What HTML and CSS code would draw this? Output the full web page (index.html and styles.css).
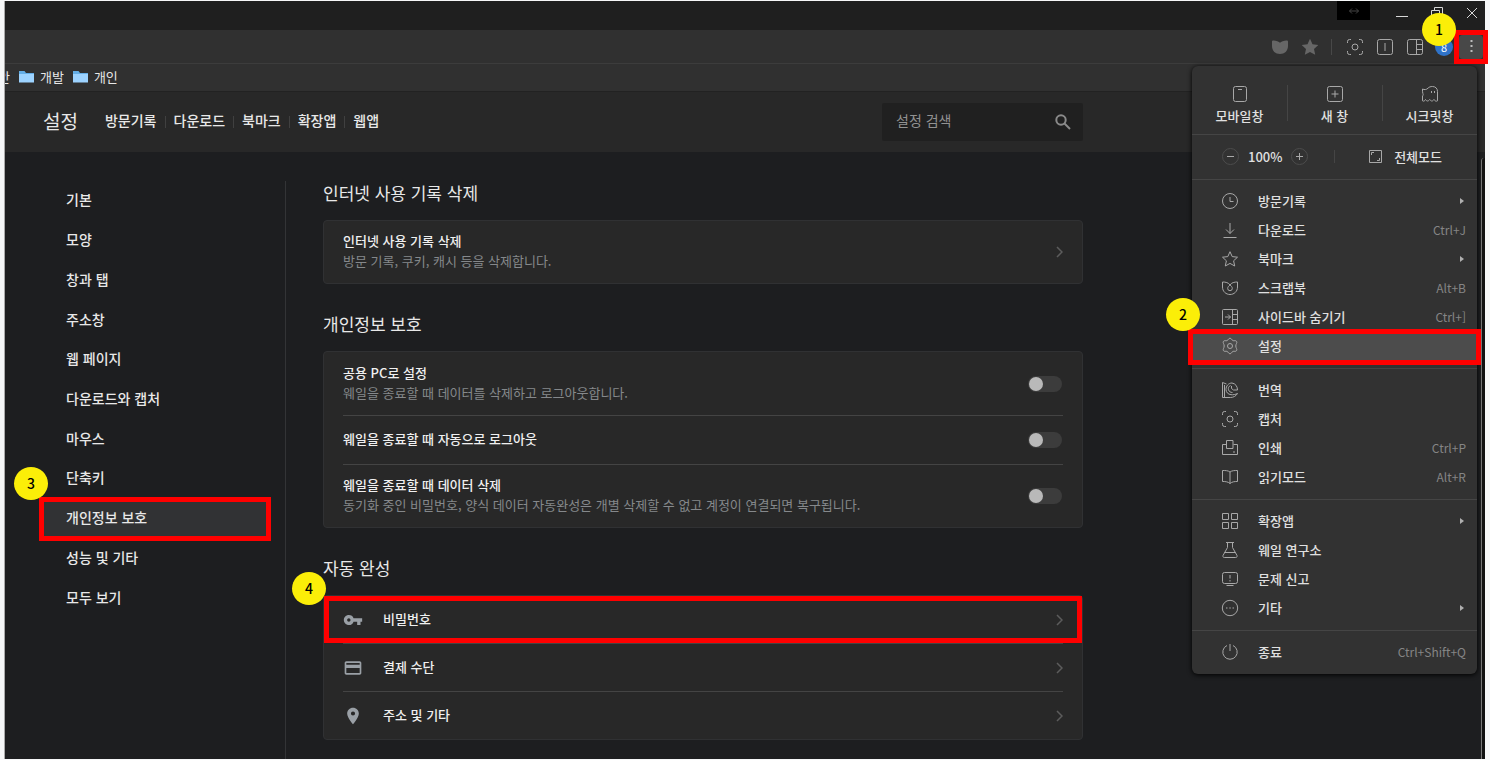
FILE: index.html
```html
<!DOCTYPE html>
<html lang="ko">
<head>
  <meta charset="UTF-8">
  <meta name="viewport" content="width=device-width, initial-scale=1.0">
  <title>설정 - 개인정보 보호</title>
  <link rel="stylesheet" href="styles.css">
</head>
<body>
  <div class="window">
    <div class="titlebar">
      <span class="resize-tab"><svg width="12" height="8" viewBox="0 0 12 8"><path d="M1.500 4h9M4 1.500L1.500 4 4 6.500M8 1.500L10.500 4 8 6.500"/></svg></span>
      <button class="win-btn" aria-label="최소화"><svg width="12" height="12" viewBox="0 0 12 12"><path d="M0 9.500h12"/></svg></button>
      <button class="win-btn" aria-label="이전 크기로"><svg width="12" height="12" viewBox="0 0 12 12"><path d="M.5 3.500h8v8h-8zM3.500 3.500v-3h8v8h-3"/></svg></button>
      <button class="win-btn" aria-label="닫기"><svg width="12" height="12" viewBox="0 0 12 12"><path d="M1 1l10 10M11 1L1 11"/></svg></button>
    </div>

    <div class="toolbar">
      <button class="tool dim" aria-label="스크랩북"><svg width="18" height="18" viewBox="0 0 18 18"><path d="M1 3.500c0-1 .8-1.200 1.700-1.100C5 2.600 8 3.200 9 4.800c1-1.600 4-2.200 6.300-2.400.9-.1 1.700.1 1.700 1.100V8c0 5-3.500 8-8 8s-8-3-8-8z"/></svg></button>
      <button class="tool dim" aria-label="북마크 추가"><svg width="18" height="18" viewBox="0 0 18 18"><path d="M9 .8l2.500 5.400 5.800.7-4.300 4 1.200 5.900L9 13.900l-5.200 2.900L5 10.900.7 6.900l5.800-.7z"/></svg></button>
      <span class="tool-sep"></span>
      <button class="tool" aria-label="캡처"><svg width="16" height="16" viewBox="0 0 16 16"><path d="M.5 4V2.500a2 2 0 0 1 2-2H4M12 .5h1.500a2 2 0 0 1 2 2V4M15.500 12v1.500a2 2 0 0 1-2 2H12M4 15.500H2.500a2 2 0 0 1-2-2V12"/><circle cx="8" cy="8" r="3"/></svg></button>
      <button class="tool" aria-label="듀얼 탭"><svg width="16" height="16" viewBox="0 0 16 16"><rect x=".5" y=".5" width="15" height="15" rx="2"/><path d="M8 4v8"/></svg></button>
      <button class="tool" aria-label="사이드바"><svg width="16" height="16" viewBox="0 0 16 16"><rect x=".5" y=".5" width="15" height="15" rx="2"/><path d="M9.500 .5v15M9.500 5.500h6M9.500 10.500h6"/></svg></button>
      <button class="avatar">8</button>
      <div class="more-wrap mark">
        <button class="more" aria-label="메뉴"><svg width="3" height="13" viewBox="0 0 3 13"><path d="M.5 0h2v2h-2zM.5 5h2v2h-2zM.5 10h2v2h-2z"/></svg></button>
        <span class="badge">1</span>
      </div>
    </div>

    <div class="bookmarks">
      <a class="bookmark first" href="#">안</a>
      <a class="bookmark" href="#"><svg width="15" height="13" viewBox="0 0 15 13"><path fill="#64aee6" d="M0 1h5.500l1.500 2h8v9H0z"/><path fill="#9dd3ff" d="M0 4h15v8.500H0z"/></svg>개발</a>
      <a class="bookmark" href="#"><svg width="15" height="13" viewBox="0 0 15 13"><path fill="#64aee6" d="M0 1h5.500l1.500 2h8v9H0z"/><path fill="#9dd3ff" d="M0 4h15v8.500H0z"/></svg>개인</a>
    </div>

    <header class="header">
      <div class="header-inner">
        <h1>설정</h1>
        <nav class="tabs">
          <a href="#">방문기록</a>
          <a href="#">다운로드</a>
          <a href="#">북마크</a>
          <a href="#">확장앱</a>
          <a href="#">웹앱</a>
        </nav>
        <label class="search">
          <input type="text" placeholder="설정 검색" aria-label="설정 검색">
          <svg width="16" height="16" viewBox="0 0 16 16"><circle cx="6" cy="6" r="4.700"/><path d="M9.500 9.500l5.500 5.500"/></svg>
        </label>
      </div>
    </header>

    <div class="page">
      <div class="page-inner">
        <aside class="sidebar">
          <nav class="side-list">
            <a href="#">기본</a>
            <a href="#">모양</a>
            <a href="#">창과 탭</a>
            <a href="#">주소창</a>
            <a href="#">웹 페이지</a>
            <a href="#">다운로드와 캡처</a>
            <a href="#">마우스</a>
            <a href="#">단축키</a>
            <a href="#" class="active mark">개인정보 보호<span class="badge">3</span></a>
            <a href="#">성능 및 기타</a>
            <a href="#">모두 보기</a>
          </nav>
        </aside>

        <main class="content">
          <section>
            <h2>인터넷 사용 기록 삭제</h2>
            <div class="card">
              <a class="row tall" href="#">
                <span class="text"><strong>인터넷 사용 기록 삭제</strong><small>방문 기록, 쿠키, 캐시 등을 삭제합니다.</small></span>
                <svg class="chevron" width="7" height="12" viewBox="0 0 7 12"><path d="M1 1l5 5-5 5"/></svg>
              </a>
            </div>
          </section>

          <section>
            <h2>개인정보 보호</h2>
            <div class="card">
              <label class="row tall">
                <span class="text"><strong>공용 PC로 설정</strong><small>웨일을 종료할 때 데이터를 삭제하고 로그아웃합니다.</small></span>
                <input class="toggle" type="checkbox">
              </label>
              <label class="row">
                <span class="text"><strong>웨일을 종료할 때 자동으로 로그아웃</strong></span>
                <input class="toggle" type="checkbox">
              </label>
              <label class="row tall">
                <span class="text"><strong>웨일을 종료할 때 데이터 삭제</strong><small>동기화 중인 비밀번호, 양식 데이터 자동완성은 개별 삭제할 수 없고 계정이 연결되면 복구됩니다.</small></span>
                <input class="toggle" type="checkbox">
              </label>
            </div>
          </section>

          <section>
            <h2>자동 완성</h2>
            <div class="card autofill">
              <a class="row mark" href="#">
                <svg class="row-icon" width="20" height="20" viewBox="0 0 24 24"><path d="M12.650 10A5.990 5.990 0 0 0 7 6c-3.310 0-6 2.690-6 6s2.690 6 6 6a5.990 5.990 0 0 0 5.650-4H17v4h4v-4h2v-4H12.650zM7 14c-1.100 0-2-.9-2-2s.9-2 2-2 2 .9 2 2-.9 2-2 2z"/></svg>
                <span class="text"><strong>비밀번호</strong></span>
                <svg class="chevron" width="7" height="12" viewBox="0 0 7 12"><path d="M1 1l5 5-5 5"/></svg>
                <span class="badge">4</span>
              </a>
              <a class="row" href="#">
                <svg class="row-icon" width="20" height="20" viewBox="0 0 24 24"><path d="M20 4H4c-1.110 0-1.990.89-1.990 2L2 18c0 1.110.89 2 2 2h16c1.110 0 2-.89 2-2V6c0-1.110-.89-2-2-2zm0 14H4v-6h16v6zm0-10H4V6h16v2z"/></svg>
                <span class="text"><strong>결제 수단</strong></span>
                <svg class="chevron" width="7" height="12" viewBox="0 0 7 12"><path d="M1 1l5 5-5 5"/></svg>
              </a>
              <a class="row" href="#">
                <svg class="row-icon" width="20" height="20" viewBox="0 0 24 24"><path d="M12 2C8.130 2 5 5.130 5 9c0 5.250 7 13 7 13s7-7.750 7-13c0-3.870-3.130-7-7-7zm0 9.500a2.500 2.500 0 0 1 0-5 2.500 2.500 0 0 1 0 5z"/></svg>
                <span class="text"><strong>주소 및 기타</strong></span>
                <svg class="chevron" width="7" height="12" viewBox="0 0 7 12"><path d="M1 1l5 5-5 5"/></svg>
              </a>
            </div>
          </section>
        </main>
      </div>
      <div class="scrollbar"></div>
    </div>

    <!-- 브라우저 메뉴 -->
    <div class="menu">
      <div class="menu-top">
        <button><svg width="16" height="18" viewBox="0 0 16 18"><rect x="1.500" y="1.500" width="13" height="15" rx="2"/><path d="M6 4.500h4"/></svg>모바일창</button>
        <button><svg width="18" height="18" viewBox="0 0 18 18"><rect x="1.500" y="1.500" width="15" height="15" rx="2"/><path d="M9 5.500v7M5.500 9h7"/></svg>새 창</button>
        <button><svg width="18" height="18" viewBox="0 0 18 18"><path d="M1.500 4c2 1 4 .7 5.500-.8 1-1.200 2.500-1.700 4.500-1.700 3 0 5 2 5 5v9.300c-1.200.8-2.500.4-3.500-1.300-1.500 2-2.800 2-4.300 0-1.500 2-2.900 2-4.200 0-.9 1.700-1.800 2-3 1.300V11c.8-1 .8-1.800.3-2.700C1.400 7 1.500 5.500 1.500 4z"/><path d="M10.500 6v2M13.500 6v2"/></svg>시크릿창</button>
      </div>
      <div class="menu-zoom">
        <div class="zoom">
          <button class="round" aria-label="축소"><svg width="7" height="7" viewBox="0 0 7 7"><path d="M0 3.500h7"/></svg></button>
          <span>100%</span>
          <button class="round" aria-label="확대"><svg width="7" height="7" viewBox="0 0 7 7"><path d="M0 3.500h7M3.500 0v7"/></svg></button>
        </div>
        <button class="full"><svg width="13" height="13" viewBox="0 0 13 13"><path d="M.5 .5h12v12H.5z"/><path d="M2.500 5V2.500H5M10.500 8v2.500H8"/></svg>전체모드</button>
      </div>
      <div class="menu-group">
        <button class="item"><svg width="18" height="18" viewBox="0 0 18 18"><circle cx="9" cy="9" r="7.500"/><path d="M9 5v4.500h3.500"/></svg>방문기록<i class="arrow"></i></button>
        <button class="item"><svg width="18" height="18" viewBox="0 0 18 18"><path d="M9 2v10.500M5 8.500l4 4 4-4M2.500 16.500h13"/></svg>다운로드<kbd>Ctrl+J</kbd></button>
        <button class="item"><svg width="18" height="18" viewBox="0 0 18 18"><path d="M9 1.700l2.200 4.900 5.300.6-3.900 3.600 1.100 5.200L9 13.400 4.300 16l1.100-5.200-3.900-3.600 5.300-.6z"/></svg>북마크<i class="arrow"></i></button>
        <button class="item"><svg width="18" height="18" viewBox="0 0 18 18"><path d="M1.500 3c3 0 6 .5 7.500 3 1.500-2.500 4.500-3 7.500-3v5c0 4.500-3.500 7.500-7.500 7.500S1.500 12.500 1.500 8z"/><path d="M9 6c-1.300 1-2.300 2-2.300 3.400a2.300 2.300 0 0 0 4.600 0C11.300 8 10.300 7 9 6z"/></svg>스크랩북<kbd>Alt+B</kbd></button>
        <button class="item"><svg width="18" height="18" viewBox="0 0 18 18"><rect x="1.500" y="1.500" width="15" height="15" rx="1"/><path d="M11.500 1.500v15M11.500 6.500h5M11.500 11.500h5M4 9h5.500M7 6.500L9.500 9 7 11.500"/></svg>사이드바 숨기기<kbd>Ctrl+]</kbd></button>
        <button class="item current mark"><svg width="18" height="18" viewBox="0 0 18 18"><path d="M9 1.200c1.400 0 1.700 1.900 2.900 2.400 1.200.5 2.800-.5 3.700.8.800 1.500-.8 2.500-.8 4.600s1.600 3.100.8 4.600c-.9 1.300-2.500.3-3.700.8-1.200.5-1.500 2.400-2.900 2.400s-1.700-1.900-2.900-2.400c-1.200-.5-2.800.5-3.700-.8-.8-1.500.8-2.500.8-4.600S1.600 5.900 2.400 4.400c.9-1.300 2.500-.3 3.700-.8C7.300 3.100 7.600 1.200 9 1.200z"/><circle cx="9" cy="9" r="2.500"/></svg>설정<span class="badge">2</span></button>
      </div>
      <div class="menu-group">
        <button class="item"><svg width="18" height="18" viewBox="0 0 18 18"><path d="M3.500 4v12.500h6c3 0 5.500-1.500 7-4-2 1-4.500 1.500-6.500 1.200-3-.4-5-2.500-5-5.200C5 5 7.500 2 11 2c3.500.5 5.500 3.500 5.500 7h-4l-2-1.500V5M1.500 16.500V1.500l4 1.500M1.500 16.500h3"/><path d="M9.500 4.500C7.500 5.500 7 7 7.500 8.800c.5 1.700 2 2.700 4 2.700"/></svg>번역</button>
        <button class="item"><svg width="18" height="18" viewBox="0 0 18 18"><path d="M1.500 5V3.500a2 2 0 0 1 2-2H5M13 1.500h1.500a2 2 0 0 1 2 2V5M16.500 13v1.500a2 2 0 0 1-2 2H13M5 16.500H3.500a2 2 0 0 1-2-2V13"/><circle cx="9" cy="9" r="3"/></svg>캡처</button>
        <button class="item"><svg width="18" height="18" viewBox="0 0 18 18"><path d="M5.500 5.500h-4v10h15v-10h-4M5.500 1.500h6.500v8H5.500zM12 13h2"/></svg>인쇄<kbd>Ctrl+P</kbd></button>
        <button class="item"><svg width="18" height="18" viewBox="0 0 18 18"><path d="M9 4C7 2.500 4.500 2.500 1.500 2.500v11c3 0 5.500.2 7.500 2 2-1.800 4.500-2 7.500-2v-11C13.500 2.500 11 2.500 9 4zM9 4v11.500"/></svg>읽기모드<kbd>Alt+R</kbd></button>
      </div>
      <div class="menu-group">
        <button class="item"><svg width="18" height="18" viewBox="0 0 18 18"><path d="M1.500 1.500h6v6h-6zM10.500 1.500h6v6h-6zM1.500 10.500h6v6h-6zM10.500 10.500h6v6h-6z"/></svg>확장앱<i class="arrow"></i></button>
        <button class="item"><svg width="18" height="18" viewBox="0 0 18 18"><path d="M5 1.500h8M6.500 1.500v5L2 14.500c-.4 1 .1 2 1.300 2h11.400c1.200 0 1.700-1 1.300-2l-4.500-8v-5M3.500 11.500h11"/></svg>웨일 연구소</button>
        <button class="item"><svg width="18" height="18" viewBox="0 0 18 18"><rect x="1.500" y="2.500" width="15" height="11" rx="2"/><path d="M9 5v3.500M9 10v1.500M5.500 15.500h7"/></svg>문제 신고</button>
        <button class="item"><svg width="18" height="18" viewBox="0 0 18 18"><circle cx="9" cy="9" r="7.700"/><path d="M5 9h1.500M8.300 9h1.500M11.500 9H13"/></svg>기타<i class="arrow"></i></button>
      </div>
      <div class="menu-group">
        <button class="item"><svg width="18" height="18" viewBox="0 0 18 18"><path d="M6 2.500a7.200 7.200 0 1 0 6 0M9 1v7"/></svg>종료<kbd>Ctrl+Shift+Q</kbd></button>
      </div>
    </div>
  </div>
</body>
</html>
```
FILE: styles.css
```css
* { box-sizing:border-box; }
body { margin:0; padding:1px 5px 1px 4px; min-height:100vh; display:flex; background:#f6f7f8; color:#e8e8e8; font-family:'Noto Sans CJK KR', sans-serif; font-size:14px; }
a { color:inherit; text-decoration:none; }
button { margin:0; padding:0; border:none; background:none; color:inherit; font:inherit; cursor:pointer; }
svg { display:block; flex:none; fill:none; stroke:#a8a8a8; }
h1, h2 { margin:0; font-weight:400; }

.window { position:relative; flex:1; min-width:0; display:flex; flex-direction:column; background:#1d1e20; border-left:1px solid #aaa; }

/* 번호 표시 */
.mark { position:relative; }
.mark::after { content:''; position:absolute; inset:0; border:5px solid #f00; pointer-events:none; }
.badge { position:absolute; z-index:2; width:34px; height:33px; border-radius:50%; background:#fbee08; color:#000; font-size:14px; font-weight:500; line-height:33px; text-align:center; }

/* 브라우저 상단 */
.titlebar { height:29px; display:flex; justify-content:flex-end; background:#1f1f1f; }
.resize-tab { width:33px; height:19px; margin-right:14px; display:flex; align-items:center; justify-content:center; background:#000; }
.resize-tab svg { stroke:#444; }
.win-btn { width:35px; height:24px; display:flex; align-items:center; justify-content:center; }
.win-btn:last-child { margin-right:-4px; }
.win-btn svg { stroke:#d8d8d8; }
.toolbar { height:34px; padding-right:2px; display:flex; align-items:center; justify-content:flex-end; background:#303030; border-bottom:1px solid #3c3c3c; }
.tool { width:30px; display:flex; justify-content:center; }
.dim svg { fill:#666; stroke:none; }
.tool-sep { width:1px; height:16px; margin:0 8px 0 6px; background:#484848; }
.avatar { width:18px; height:18px; margin:0 6px 0 5px; border-radius:50%; background:#2f73c9; color:#fff; font-size:11px; line-height:18px; }
.more-wrap { z-index:4; }
.more-wrap::after { inset:-5px; }
.more { width:24px; height:24px; display:flex; align-items:center; justify-content:center; border-radius:4px; background:#484848; }
.more svg { fill:#bbb; stroke:none; }
.more-wrap .badge { right:27px; bottom:13px; }
.bookmarks { height:27px; padding-bottom:2px; display:flex; align-items:center; gap:9px; overflow:hidden; background:#303030; font-size:13px; }
.bookmark { display:flex; align-items:center; gap:6px; }
.bookmark svg { stroke:none; }
.first { margin-left:-7px; }

/* 설정 헤더 */
.header { padding-left:38px; background:#282828; border-top:1px solid #222; }
.header-inner { max-width:1040px; height:60px; display:flex; align-items:center; }
h1 { margin-right:27px; padding-bottom:4px; font-size:19px; }
.tabs { flex:1; padding-bottom:4px; display:flex; font-weight:500; }
.tabs a { position:relative; margin-right:17px; white-space:nowrap; }
.tabs a:not(:last-child)::after { content:''; position:absolute; right:-9px; top:6px; width:1px; height:12px; background:#404040; }
.search { width:201px; height:38px; padding:0 12px 0 14px; display:flex; align-items:center; border-radius:2px; background:#202020; }
.search input { flex:1; min-width:0; padding:0 0 4px; border:none; outline:none; background:none; color:#ddd; font:inherit; }
.search input::placeholder { color:#929292; opacity:1; }
.search svg { stroke:#8a8a8a; stroke-width:2; }

/* 본문 */
.page { flex:1; display:flex; }
.page-inner { flex:1; max-width:1078px; padding-left:38px; display:flex; }
.sidebar { width:243px; margin-top:29px; border-right:1px solid #333436; }
.side-list { width:224px; min-height:437px; display:grid; grid-auto-rows:1fr; font-weight:500; }
.side-list a { padding:0 0 3px 23px; display:flex; align-items:center; }
.side-list .active { background:#313234; }
.active::after { inset:-2px -4px -2px; }
.active .badge { left:-29px; top:-32px; }
.content { flex:1; min-width:0; padding:29px 0 16px 37px; }
section { margin-bottom:28px; }
section:last-child { margin-bottom:0; }
h2 { margin-bottom:15px; font-size:17px; line-height:24px; }
.card { padding:0 19px; border:1px solid #303133; border-radius:4px; background:#282828; }
.row { height:49px; display:flex; align-items:center; justify-content:space-between; border-bottom:1px solid #444; }
.row.tall { height:64px; }
.card .row:last-child { border-bottom:none; height:62px; }
.text { flex:1; padding-bottom:2px; display:flex; flex-direction:column; font-size:13px; line-height:20px; }
.text strong { font-weight:500; color:#f0f0f0; }
.text small { font-size:13px; color:#85888b; }
.chevron { stroke:#5c5c5c; stroke-width:1.5; }
.autofill .row { height:48px; }
.autofill .row:last-child { height:47px; }
.row-icon { margin-right:20px; fill:#9aa0a6; stroke:none; }
.card .row.mark::after { inset:0 -19px; }
.row .badge { left:-51px; top:-24px; }
.toggle { appearance:none; width:34px; height:16px; margin:0 1px 0 0; padding:1px; border-radius:8px; background:#3c3c3c; cursor:pointer; }
.toggle::before { content:''; display:block; width:14px; height:14px; border-radius:50%; background:#b9b9b9; }
.toggle:checked::before { margin-left:auto; }
.scrollbar { width:4px; margin:6px 0 0 auto; border-left:1px solid #777; border-top-left-radius:3px; background:#111; }

/* 메뉴 */
.menu { position:absolute; z-index:3; top:65px; right:8px; width:285px; border-radius:6px; background:#323232; color:#e0e0e0; font-size:13px; font-weight:500; box-shadow:0 1px 5px #000; }
.menu-top { height:68px; padding-top:19px; display:flex; }
.menu-top button { position:relative; flex:1; height:44px; display:flex; flex-direction:column; align-items:center; gap:3px; line-height:20px; }
.menu-top button + button::before { content:''; position:absolute; left:0; top:0; width:1px; height:36px; background:#454545; }
.menu-zoom { height:45px; padding:0 35px 2px 30px; display:flex; align-items:center; justify-content:space-between; border-top:1px solid #454545; }
.zoom { display:flex; align-items:center; gap:9px; }
.round { width:17px; height:17px; display:flex; align-items:center; justify-content:center; border:1px solid #4c4c4c; border-radius:50%; }
.full { display:flex; align-items:center; gap:12px; }
.full::before { content:''; width:1px; height:13px; margin-right:22px; background:#454545; }
.menu-group { padding:7px 0; border-top:1px solid #454545; }
.item { width:100%; height:29px; padding:0 11px 2px 29px; display:flex; align-items:center; gap:19px; text-align:left; }
.item svg { margin-top:1px; }
kbd { margin-left:auto; font:inherit; font-size:12px; font-weight:400; color:#858585; }
.arrow { margin:0 2px 0 auto; border:solid transparent; border-width:3px 0 3px 4px; border-left-color:#b0b0b0; }
.current { background:#4c4c4c; }
.current::after { inset:-3px -4px -4px; }
.current .badge { left:-26px; top:-34px; }
```
